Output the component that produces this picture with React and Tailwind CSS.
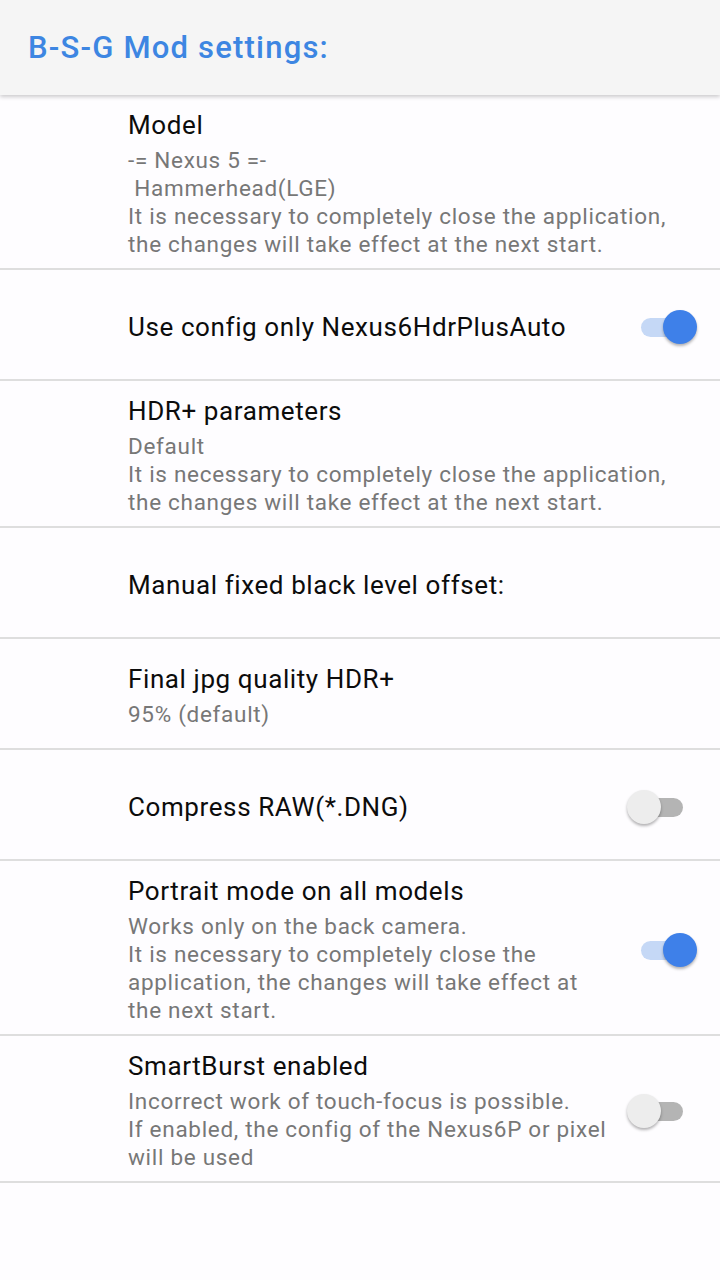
import React, { useState } from "react";

const prefs = [
  {
    title: "Model",
    summary: "-= Nexus 5 =-\n Hammerhead(LGE)\nIt is necessary to completely close the application, the changes will take effect at the next start.",
  },
  { title: "Use config only Nexus6HdrPlusAuto", toggle: true, on: true },
  {
    title: "HDR+ parameters",
    summary: "Default\nIt is necessary to completely close the application, the changes will take effect at the next start.",
  },
  { title: "Manual fixed black level offset:" },
  { title: "Final jpg quality HDR+", summary: "95% (default)" },
  { title: "Compress RAW(*.DNG)", toggle: true, on: false },
  {
    title: "Portrait mode on all models",
    summary: "Works only on the back camera.\nIt is necessary to completely close the application, the changes will take effect at the next start.",
    toggle: true,
    on: true,
  },
  {
    title: "SmartBurst enabled",
    summary: "Incorrect work of touch-focus is possible.\nIf enabled, the config of the Nexus6P or pixel will be used",
    toggle: true,
    on: false,
  },
];

const Switch = ({ checked, onChange }) => (
  <button
    onClick={onChange}
    className="relative w-[70px] h-[36px] shrink-0 flex items-center"
  >
    <span
      className={`absolute left-[14px] right-[14px] h-[19px] rounded-full ${
        checked ? "bg-[#c5d8f6]" : "bg-[#b4b4b4]"
      }`}
    />
    <span
      className={`absolute top-[1px] w-[34px] h-[34px] rounded-full shadow-[0_2px_3px_rgba(0,0,0,0.3)] ${
        checked ? "left-[36px] bg-[#3e80e9]" : "left-0 bg-[#ededed]"
      }`}
    />
  </button>
);

export default function App() {
  const [state, setState] = useState(prefs.map((p) => !!p.on));

  return (
    <div
      className="min-h-[1280px] bg-[#fefdff]"
      style={{ fontFamily: "Roboto, 'Noto Sans', sans-serif" }}
    >
      <div className="h-[95px] bg-[#f5f5f5] flex items-center px-[28px] shadow-[0_2px_4px_rgba(0,0,0,0.2)] relative">
        <h1 className="text-[31px] tracking-[1.2px] font-medium text-[#3d86e2] mt-[2px]">B-S-G Mod settings:</h1>
      </div>

      <div>
        {prefs.map((p, i) => (
          <div key={i} className="border-b-2 border-[#dedede]">
            <div className="min-h-[109px] flex items-center pl-[128px] pr-[23px] pt-[15px] pb-[10px]">
              <div className={`flex-1 ${p.toggle ? "mr-[12px]" : ""}`}>
                <p className="text-[26px] tracking-[0.6px] leading-[30px] text-[#0c0c0c]">{p.title}</p>
                {p.summary && (
                  <p className="mt-[6px] text-[22.5px] tracking-[0.7px] leading-[28px] text-[#777] whitespace-pre-wrap">
                    {p.summary}
                  </p>
                )}
              </div>
              {p.toggle && (
                <Switch
                  checked={state[i]}
                  onChange={() =>
                    setState((s) => s.map((v, j) => (j === i ? !v : v)))
                  }
                />
              )}
            </div>
          </div>
        ))}
      </div>
    </div>
  );
}
